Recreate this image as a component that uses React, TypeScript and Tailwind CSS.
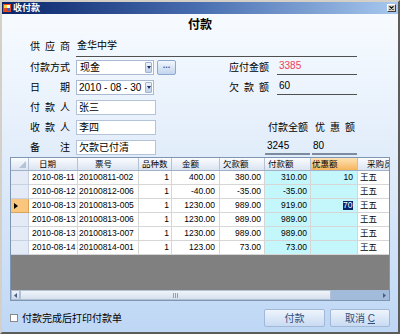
import React from 'react'

type Row = {
    date: string
    no: string
    qty: string
    amt: string
    owe: string
    pay: string
    disc: string
    buyer: string
}

const rows: Row[] = [
    { date: '2010-08-11', no: '20100811-002', qty: '1', amt: '400.00', owe: '380.00', pay: '310.00', disc: '10', buyer: '王五' },
    { date: '2010-08-12', no: '20100812-006', qty: '1', amt: '-40.00', owe: '-35.00', pay: '-35.00', disc: '', buyer: '王五' },
    { date: '2010-08-13', no: '20100813-005', qty: '1', amt: '1230.00', owe: '989.00', pay: '919.00', disc: '70', buyer: '王五' },
    { date: '2010-08-13', no: '20100813-006', qty: '1', amt: '1230.00', owe: '989.00', pay: '989.00', disc: '', buyer: '王五' },
    { date: '2010-08-13', no: '20100813-007', qty: '1', amt: '1230.00', owe: '989.00', pay: '989.00', disc: '', buyer: '王五' },
    { date: '2010-08-14', no: '20100814-001', qty: '1', amt: '123.00', owe: '73.00', pay: '73.00', disc: '', buyer: '王五' },
]

type Col = {
    key: keyof Row
    title: string
    w: string
    head: string
    cell: string
    bg: string
}

const cols: Col[] = [
    { key: 'date', title: '日期', w: 'w-[49px]', head: 'pl-[10px]', cell: 'pl-[3px]', bg: 'bg-white' },
    { key: 'no', title: '票号', w: 'w-[61px]', head: 'pl-[17px]', cell: 'pl-[1px]', bg: 'bg-white' },
    { key: 'qty', title: '品种数', w: 'w-[33px]', head: 'pl-[3px]', cell: 'justify-end pr-[2px]', bg: 'bg-white' },
    { key: 'amt', title: '金额', w: 'w-[48px]', head: 'pl-[10px]', cell: 'justify-end pr-[4px]', bg: 'bg-white' },
    { key: 'owe', title: '欠款额', w: 'w-[45px]', head: 'pl-[3px]', cell: 'justify-end pr-[3px]', bg: 'bg-white' },
    { key: 'pay', title: '付款额', w: 'w-[46px]', head: 'pl-[3px]', cell: 'justify-end pr-[3px]', bg: 'bg-[#c3f7fc]' },
    { key: 'disc', title: '优惠额', w: 'w-[47px]', head: 'pl-[1px]', cell: 'justify-end pr-[4px]', bg: 'bg-[#c3f7fc]' },
    { key: 'buyer', title: '采购员', w: 'w-[44px]', head: 'pl-[9px]', cell: 'pl-[2px]', bg: 'bg-white' },
]

const Label = ({ text, className = '' }: { text: string; className?: string }) => (
    <div className={`flex w-[40px] shrink-0 justify-between ${className}`}>
        {text.split('').map((c, i) => (
            <span key={i}>{c}</span>
        ))}
    </div>
)

const DropBtn = () => (
    <div className="ml-auto flex h-[11px] w-[7px] items-center justify-center rounded-[1px] border border-[#9db4d6] bg-linear-to-b from-[#eef4fc] to-[#bcd0ec]">
        <svg width="4" height="3" viewBox="0 0 4 3">
            <path d="M0 0h4L2 3z" fill="#1e3560" />
        </svg>
    </div>
)

const TextBox = ({ value }: { value: string }) => (
    <div className="ml-[6px] flex h-[15px] w-[80px] items-center border border-[#b4c3d8] bg-white pl-[2px]">
        {value}
    </div>
)

const App = () => {
    return (
        <div className="flex h-[334px] w-[400px] flex-col overflow-hidden border-2 border-t-[#d4d0c8] border-l-[#d4d0c8] border-r-[#5c5c5c] border-b-[#5c5c5c] font-['Liberation_Sans','Noto_Sans_CJK_SC',sans-serif] text-[10px] text-black">
            {/* title bar */}
            <div className="flex h-[12px] shrink-0 items-center bg-linear-to-r from-[#0a246a] via-[#4a6fb0] to-[#a8c8ee] pl-[1px] pr-[2px]">
                <svg width="8" height="8" viewBox="0 0 8 8">
                    <rect x="0" y="0" width="8" height="8" fill="#e84a1c" />
                    <rect x="1" y="1" width="3" height="3" fill="#ffd23c" />
                    <rect x="4" y="4" width="3" height="3" fill="#2c6bd8" />
                    <rect x="4" y="1" width="3" height="3" fill="#ffffff" />
                </svg>
                <span className="ml-[2px] text-[9px] font-bold leading-none text-white">收付款</span>
                <div className="ml-auto flex h-[8px] w-[9px] items-center justify-center border border-t-white border-l-white border-r-[#404040] border-b-[#404040] bg-[#d4d0c8]">
                    <svg width="5" height="4" viewBox="0 0 5 4">
                        <path d="M0.5 0.3L4.5 3.7M4.5 0.3L0.5 3.7" stroke="#000" strokeWidth="1.1" />
                    </svg>
                </div>
            </div>

            {/* body */}
            <div className="flex flex-1 flex-col bg-linear-to-b from-[#f7fbff] via-[#dfebfa] to-[#bed7f5]">
                <div className="flex h-[21px] shrink-0 items-center justify-center text-[12px] font-bold">付款</div>

                <div className="flex flex-col pl-[28px]">
                    {/* 供应商 */}
                    <div className="flex h-[22px] items-center">
                        <Label text="供应商" />
                        <div className="ml-[6px] flex h-full w-[281px] items-center border-b border-[#505050] pl-[1px]">
                            金华中学
                        </div>
                    </div>

                    {/* 付款方式 */}
                    <div className="flex h-[20px] items-center">
                        <Label text="付款方式" />
                        <div className="ml-[6px] flex h-[15px] w-[78px] items-center border border-[#a9bad2] bg-white pl-[3px] pr-[1px]">
                            现金
                            <DropBtn />
                        </div>
                        <div className="ml-[3px] flex h-[15px] w-[19px] items-center justify-center rounded-[2px] border border-[#8ea8cc] bg-linear-to-b from-[#f2f7fd] to-[#c2d5ef] pb-[3px] text-[9px] font-bold text-[#35589a]">
                            ...
                        </div>
                        <Label text="应付金额" className="ml-[53px]" />
                        <div className="ml-[8px] flex h-[18px] w-[80px] items-end self-start border-b border-[#505050] pb-[1px] pl-[2px] text-[#f0405a]">
                            3385
                        </div>
                    </div>

                    {/* 日期 */}
                    <div className="flex h-[20px] items-center">
                        <Label text="日期" />
                        <div className="ml-[6px] flex h-[15px] w-[78px] items-center border border-[#a9bad2] bg-white pl-[2px] pr-[1px]">
                            2010 - 08 - 30
                            <DropBtn />
                        </div>
                        <Label text="欠款额" className="ml-[75px]" />
                        <div className="ml-[8px] flex h-[18px] w-[80px] items-end self-start border-b border-[#505050] pb-[1px] pl-[2px]">
                            60
                        </div>
                    </div>

                    {/* 付款人 */}
                    <div className="flex h-[20px] items-center">
                        <Label text="付款人" />
                        <TextBox value="张三" />
                    </div>

                    {/* 收款人 */}
                    <div className="flex h-[20px] items-center">
                        <Label text="收款人" />
                        <TextBox value="李四" />
                        <Label text="付款全额" className="ml-[112px]" />
                        <Label text="优惠额" className="ml-[7px]" />
                    </div>

                    {/* 备注 */}
                    <div className="flex h-[20px] items-center">
                        <Label text="备注" />
                        <TextBox value="欠款已付清" />
                        <div className="ml-[109px] flex h-[18px] w-[45px] items-center self-start border-b-2 border-[#7d8b9e] pl-[2px]">
                            3245
                        </div>
                        <div className="ml-[2px] flex h-[18px] w-[45px] items-center self-start border-b-2 border-[#7d8b9e] pl-[1px]">
                            80
                        </div>
                    </div>
                </div>

                {/* grid */}
                <div className="mx-[8px] flex h-[144px] shrink-0 flex-col overflow-hidden border border-[#7f95b4] text-[8.5px] leading-none">
                    <div className="flex h-[13px] shrink-0 border-b border-[#9fb0c8]">
                        <div className="relative w-[18px] shrink-0 border-r border-[#b4c2d6] bg-linear-to-b from-[#fbfcfe] to-[#dbe4f1]">
                            <svg className="absolute right-[2px] bottom-[2px]" width="7" height="7" viewBox="0 0 7 7">
                                <path d="M7 0V7H0z" fill="#b3c3da" />
                            </svg>
                        </div>
                        {cols.map((c) => (
                            <div
                                key={c.key}
                                className={`${c.w} flex shrink-0 items-center overflow-hidden whitespace-nowrap border-r border-[#b4c2d6] ${c.head} ${
                                    c.key === 'disc'
                                        ? 'bg-linear-to-b from-[#fde3b3] to-[#f5b55a]'
                                        : 'bg-linear-to-b from-[#fbfcfe] to-[#dbe4f1]'
                                }`}
                            >
                                {c.title}
                            </div>
                        ))}
                    </div>

                    {rows.map((r, ri) => (
                        <div key={ri} className="flex h-[14px] shrink-0">
                            <div
                                className={`flex w-[18px] shrink-0 items-center border-r border-b pl-[3px] ${
                                    ri === 2
                                        ? 'border-[#d9a458] bg-[#fac57c]'
                                        : 'border-[#c6d1e2] bg-[#e4ebf6]'
                                }`}
                            >
                                {ri === 2 && (
                                    <svg width="4" height="6" viewBox="0 0 4 6">
                                        <path d="M0 0L4 3L0 6z" fill="#000" />
                                    </svg>
                                )}
                            </div>
                            {cols.map((c) => (
                                <div
                                    key={c.key}
                                    className={`${c.w} ${c.bg} ${c.cell} flex shrink-0 items-center whitespace-nowrap border-r border-b border-[#d6d6d6]`}
                                >
                                    {ri === 2 && c.key === 'disc' ? (
                                        <span className="bg-[#0a246a] px-[0.5px] text-white">{r[c.key]}</span>
                                    ) : (
                                        r[c.key]
                                    )}
                                </div>
                            ))}
                        </div>
                    ))}

                    <div className="flex-1 bg-[#808080]" />

                    {/* horizontal scrollbar */}
                    <div className="flex h-[10px] shrink-0">
                        <div className="flex w-[9px] shrink-0 items-center justify-center border border-[#aebdd2] bg-linear-to-b from-[#eef3fa] to-[#cdd9ea]">
                            <svg width="3" height="5" viewBox="0 0 3 5">
                                <path d="M3 0V5L0 2.5z" fill="#4a5f80" />
                            </svg>
                        </div>
                        <div className="flex w-[311px] shrink-0 items-center justify-center border border-[#b3c1d5] bg-linear-to-b from-[#f0f4fa] to-[#d6e0ed]">
                            <div className="flex gap-[1px]">
                                <div className="h-[5px] w-[1px] bg-[#8ea0ba]" />
                                <div className="h-[5px] w-[1px] bg-[#8ea0ba]" />
                                <div className="h-[5px] w-[1px] bg-[#8ea0ba]" />
                            </div>
                        </div>
                        <div className="flex flex-1 items-center justify-end bg-[#a3bbdb] pr-[3px]">
                            <svg width="3" height="5" viewBox="0 0 3 5">
                                <path d="M0 0V5L3 2.5z" fill="#4a5f80" />
                            </svg>
                        </div>
                    </div>
                </div>

                {/* footer */}
                <div className="mx-[8px] mt-[8px] flex h-[18px] shrink-0 items-center">
                    <div className="h-[8px] w-[8px] border border-[#8a8a8a] bg-white" />
                    <span className="ml-[4px]">付款完成后打印付款单</span>
                    <div className="ml-auto flex h-[18px] w-[61px] items-center justify-center rounded-[2px] border border-[#a3b8d6] bg-linear-to-b from-[#eef4fc] to-[#c9dbf2] text-[#2f4f80]">
                        付款
                    </div>
                    <div className="ml-[5px] flex h-[18px] w-[60px] items-center justify-center rounded-[2px] border border-[#a3b8d6] bg-linear-to-b from-[#eef4fc] to-[#c9dbf2] text-[#2f4f80]">
                        取消&nbsp;<span className="underline">C</span>
                    </div>
                </div>
            </div>
        </div>
    )
}

export default App
